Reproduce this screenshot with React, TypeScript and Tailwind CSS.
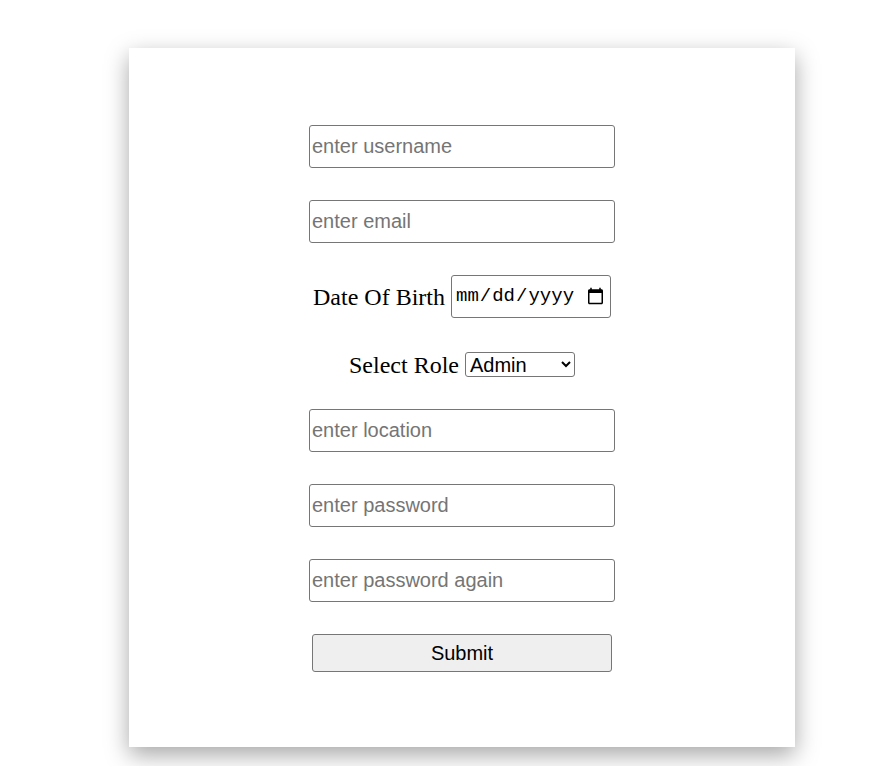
export default function App() {
  const field =
    "block h-[43px] w-[306px] rounded-[3px] border border-[#767676] px-[2px] text-[20px] text-black placeholder:text-[#757575] outline-none";
  return (
    <div className="min-h-screen bg-white pt-[48px] pl-[129px] pb-[19px]" style={{ fontFamily: '"Liberation Sans", Arial, sans-serif' }}>
      <div className="flex h-[699px] w-[666px] flex-col items-center bg-white pt-[77px] shadow-[0_8px_22px_rgba(0,0,0,0.35)]">
        <input className={field} placeholder="enter username" />
        <input className={`${field} mt-[32px]`} placeholder="enter email" />
        <div className="mt-[32px] flex h-[43px] items-center leading-none" style={{ fontFamily: '"Liberation Serif", "Times New Roman", serif' }}>
          <span className="text-[24px] text-black">Date Of Birth</span>
          <input
            type="date"
            className="ml-[6px] h-[43px] w-[160px] rounded-[3px] border border-[#767676] px-[3px] text-[19px]"
            style={{ fontFamily: '"Liberation Mono", monospace' }}
          />
        </div>
        <div className="mt-[34px] flex h-[25px] items-center leading-none" style={{ fontFamily: '"Liberation Serif", "Times New Roman", serif' }}>
          <span className="text-[24px] text-black">Select Role</span>
          <select
            className="ml-[6px] h-[25px] w-[110px] rounded-[3px] border border-[#767676] bg-white text-[20px] text-black"
            style={{ fontFamily: '"Liberation Sans", Arial, sans-serif' }}
            defaultValue="Admin"
          >
            <option>Admin</option>
            <option>User</option>
          </select>
        </div>
        <input className={`${field} mt-[32px]`} placeholder="enter location" />
        <input className={`${field} mt-[32px]`} type="password" placeholder="enter password" />
        <input className={`${field} mt-[32px]`} type="password" placeholder="enter password again" />
        <button className="mt-[32px] h-[38px] w-[300px] rounded-[3px] border border-[#767676] bg-[#efefef] text-[20px] text-black">
          Submit
        </button>
      </div>
    </div>
  );
}
